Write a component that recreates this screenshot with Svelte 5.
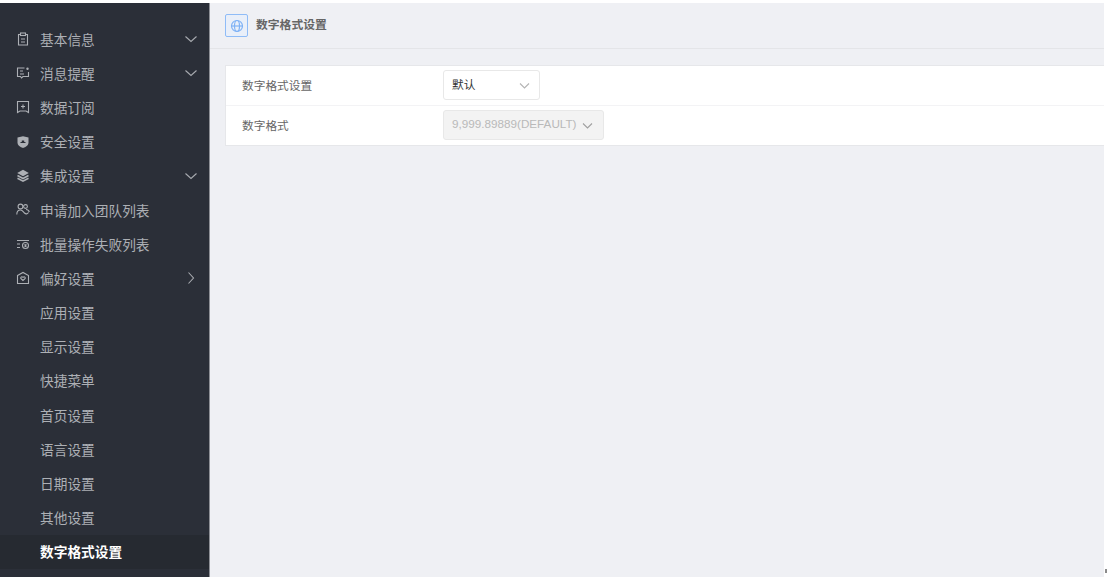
<script>
  const menu = [
    { label: '基本信息', icon: 'clipboard', arrow: 'down' },
    { label: '消息提醒', icon: 'message', arrow: 'down' },
    { label: '数据订阅', icon: 'book' },
    { label: '安全设置', icon: 'shield' },
    { label: '集成设置', icon: 'layers', arrow: 'down' },
    { label: '申请加入团队列表', icon: 'team' },
    { label: '批量操作失败列表', icon: 'batch' },
    { label: '偏好设置', icon: 'home', arrow: 'right' }
  ];
  const subMenu = ['应用设置', '显示设置', '快捷菜单', '首页设置', '语言设置', '日期设置', '其他设置', '数字格式设置'];
  const activeItem = '数字格式设置';
</script>

<div class="app">
  <aside class="sidebar">
    {#each menu as item}
      <div class="menu-item">
        <svg class="menu-icon" width="14" height="14" viewBox="0 0 14 14" fill="none" stroke="currentColor" stroke-width="1.1">
          {#if item.icon === 'clipboard'}
            <path d="M4.5 2.5H2.5v10.500h9V2.500H9.500" />
            <rect x="4.500" y="1" width="5" height="2.500" />
            <path d="M5 7h4M5 10h4" />
          {:else if item.icon === 'message'}
            <path d="M8.500 2H1.500v8.500h3l1 1.500 1.500-1.500h5.500V6" />
            <path d="M4 5h3M4 8h4" />
            <circle cx="11.500" cy="2.800" r="1.200" fill="currentColor" stroke="none" />
          {:else if item.icon === 'book'}
            <path d="M1.500 1.500h11v11L10 11H4l-2.500 1.500z" />
            <path d="M5 6.500h4M7 4.500v4" />
          {:else if item.icon === 'shield'}
            <path d="M1.500 2.500 7 1.200l5.500 1.300v5c0 3-2.700 4.500-5.500 5.500-2.800-1-5.500-2.500-5.500-5.500z" fill="currentColor" stroke="none" />
            <path d="M4.500 8h5V7H8.200V5.500H5.800V7H4.500z" fill="#2b2f38" stroke="none" />
          {:else if item.icon === 'layers'}
            <path d="M7 .8 12.800 4 7 7.200 1.200 4z" fill="currentColor" stroke="none" />
            <path d="M1.500 6.500 7 9.500l5.500-3M1.500 9.200 7 12.200l5.500-3" stroke-width="1.600" />
          {:else if item.icon === 'team'}
            <circle cx="4.500" cy="3.500" r="2.400" />
            <circle cx="9.500" cy="3.500" r="1.900" />
            <path d="M.8 11.500c0-2.800 1.500-4.500 3.700-4.500 2 0 2.500 1.500 4 3s3 1 4-.5M10 6.500c1.700 0 2.800 1 3.300 2.500" />
          {:else if item.icon === 'batch'}
            <path d="M1 3.500h12M1 7h3M1 10.500h3" />
            <circle cx="9.500" cy="8.500" r="3" />
            <path d="M8.500 7.500l2 2M10.500 7.500l-2 2" />
          {:else}
            <path d="M1.500 4.500 7 1.500l5.500 3v8h-11z" />
            <path d="M7 9.500 4.800 7.500C4.300 6 6 5.200 7 6.300 8 5.200 9.700 6 9.200 7.500z" />
          {/if}
        </svg>
        <span class="menu-label">{item.label}</span>
        {#if item.arrow}
          <svg class="arrow" class:right={item.arrow === 'right'} width="12" height="12" viewBox="0 0 12 12" fill="none" stroke="currentColor" stroke-width="1.100">
            <path d="M.5 3.500 6 8.500l5.500-5" />
          </svg>
        {/if}
      </div>
    {/each}
    {#each subMenu as label}
      <div class="menu-item sub" class:active={label === activeItem}>
        <span class="menu-label">{label}</span>
      </div>
    {/each}
  </aside>

  <main class="content">
    <header class="page-header">
      <span class="page-icon">
        <svg width="14" height="14" viewBox="0 0 14 14" fill="none" stroke="#7fb2f5" stroke-width="1.200">
          <circle cx="7" cy="7" r="5.500" />
          <ellipse cx="7" cy="7" rx="2.500" ry="5.500" />
          <path d="M1.500 7h11" />
        </svg>
      </span>
      <h1>数字格式设置</h1>
    </header>

    <section class="panel">
      <div class="row">
        <span class="row-label">数字格式设置</span>
        <div class="select">
          <span>默认</span>
          <svg width="11" height="11" viewBox="0 0 11 11" fill="none" stroke="#b4b4b4" stroke-width="1.100"><path d="M1 3.500 5.500 8 10 3.500" /></svg>
        </div>
      </div>
      <div class="row">
        <span class="row-label">数字格式</span>
        <div class="select disabled">
          <span>9,999.89889(DEFAULT)</span>
          <svg width="11" height="11" viewBox="0 0 11 11" fill="none" stroke="#a0a0a0" stroke-width="1.100"><path d="M1 3.500 5.500 8 10 3.500" /></svg>
        </div>
      </div>
    </section>
  </main>
  <span class="edge-mark"></span>
</div>

<style>
  :global(body) {
    background: #fff;
    font-family: "Liberation Sans", "Noto Sans CJK SC", sans-serif;
  }

  .app {
    position: relative;
    display: flex;
    height: 574px;
    padding: 3px 3px 0 0;
    overflow: hidden;
  }

  .edge-mark {
    position: absolute;
    right: 0;
    top: 569px;
    width: 2px;
    height: 4px;
    background: #8b8b8b;
  }

  .sidebar {
    flex: 0 0 209px;
    padding-top: 19px;
    background: #2b2f38;
    border-right: 1px solid #8e9096;
    color: #adb0b5;
  }

  .menu-item {
    display: flex;
    align-items: center;
    height: 34.200px;
    padding: 0 12px 0 16px;
    font-size: 13.700px;
  }

  .menu-icon {
    flex: none;
    margin-right: 10px;
  }

  .menu-label {
    flex: 1;
    margin-bottom: 1px;
  }

  .arrow {
    flex: none;
    color: #a8abb0;
  }

  .arrow.right {
    transform: rotate(-90deg);
  }

  .menu-item.sub {
    padding-left: 40px;
  }

  .menu-item.active {
    background: #262a31;
    color: #fff;
    font-weight: 700;
  }

  .content {
    flex: 1;
    min-width: 0;
    background: #eff0f4;
  }

  .page-header {
    display: flex;
    align-items: center;
    gap: 8px;
    height: 45px;
    padding-left: 15px;
    border-bottom: 1px solid #e4e5e8;
  }

  .page-icon {
    display: flex;
    align-items: center;
    justify-content: center;
    width: 21px;
    height: 21px;
    border: 1px solid #8fbcf7;
    border-radius: 2px;
    background: #e9eff9;
  }

  h1 {
    margin: 0 0 5px;
    font-size: 11.800px;
    font-weight: 700;
    color: #666;
  }

  .panel {
    margin: 16px 0 0 15px;
    background: #fff;
    border: 1px solid #e6e7ea;
    border-right: none;
  }

  .row {
    display: flex;
    align-items: center;
    height: 39px;
    padding-left: 16px;
  }

  .row + .row {
    border-top: 1px solid #f3f3f5;
  }

  .row-label {
    flex: 0 0 201px;
    margin-bottom: 3px;
    font-size: 11.700px;
    color: #666;
  }

  .select {
    display: flex;
    align-items: center;
    justify-content: space-between;
    box-sizing: border-box;
    width: 97px;
    height: 30px;
    margin-bottom: 1px;
    padding: 0 9px 0 8px;
    border: 1px solid #e8e8e8;
    border-radius: 3px;
    background: #fff;
    font-size: 11.700px;
    color: #333;
  }

  .select span {
    margin-bottom: 3px;
  }

  .select.disabled {
    width: 161px;
    padding-right: 10px;
    background: #f3f3f3;
    color: #b9b9b9;
  }
</style>
